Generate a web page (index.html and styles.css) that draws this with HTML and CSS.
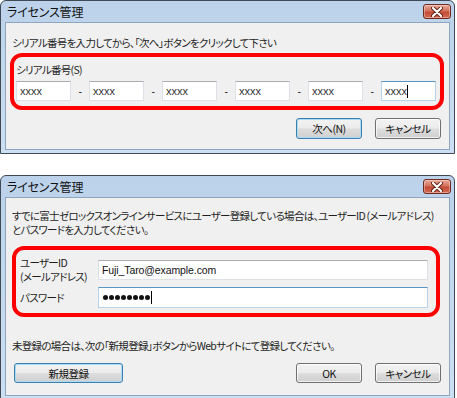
FILE: index.html
```html
<!DOCTYPE html>
<html lang="ja">
<head>
    <meta charset="UTF-8">
    <title>ライセンス管理</title>
    <link rel="stylesheet" href="styles.css">
</head>
<body>

<div class="window serial-window">
    <div class="titlebar">
        <span class="title">ライセンス管理</span>
        <button class="close-btn" aria-label="閉じる">
            <svg width="12" height="10" viewBox="0 0 12 10">
                <path d="M2 1 L10 9 M10 1 L2 9" stroke="#5a1e14" stroke-width="4" stroke-linecap="round"/>
                <path d="M2 1 L10 9 M10 1 L2 9" stroke="#ffffff" stroke-width="2.2" stroke-linecap="round"/>
            </svg>
        </button>
    </div>
    <div class="content">
        <p class="intro">シリアル番号を入力してから、「次へ」ボタンをクリックして下さい</p>
        <div class="highlight serial-box">
            <div class="label">シリアル番号(S)</div>
            <div class="serial-row">
                <div class="field serial">xxxx</div><span class="dash">-</span>
                <div class="field serial">xxxx</div><span class="dash">-</span>
                <div class="field serial">xxxx</div><span class="dash">-</span>
                <div class="field serial">xxxx</div><span class="dash">-</span>
                <div class="field serial">xxxx</div><span class="dash">-</span>
                <div class="field serial focused">xxxx<span class="caret"></span></div>
            </div>
        </div>
        <div class="buttons">
            <button class="btn default">次へ(N)</button>
            <button class="btn">キャンセル</button>
        </div>
    </div>
</div>

<div class="window login-window">
    <div class="titlebar">
        <span class="title">ライセンス管理</span>
        <button class="close-btn" aria-label="閉じる">
            <svg width="12" height="10" viewBox="0 0 12 10">
                <path d="M2 1 L10 9 M10 1 L2 9" stroke="#5a1e14" stroke-width="4" stroke-linecap="round"/>
                <path d="M2 1 L10 9 M10 1 L2 9" stroke="#ffffff" stroke-width="2.2" stroke-linecap="round"/>
            </svg>
        </button>
    </div>
    <div class="content">
        <p class="intro two-lines">すでに富士ゼロックスオンラインサービスにユーザー登録している場合は、ユーザーID (メールアドレス)<br>とパスワードを入力してください。</p>
        <div class="highlight login-box">
            <div class="label">ユーザーID<br>(メールアドレス)</div>
            <div class="field wide">Fuji_Taro@example.com</div>
            <div class="label">パスワード</div>
            <div class="field wide focused password">
                <span class="dot"></span><span class="dot"></span><span class="dot"></span><span class="dot"></span><span class="dot"></span><span class="dot"></span><span class="dot"></span><span class="dot"></span><span class="caret"></span>
            </div>
        </div>
        <p class="note">未登録の場合は、次の「新規登録」ボタンからWebサイトにて登録してください。</p>
        <div class="buttons split">
            <button class="btn default register">新規登録</button>
            <div class="right">
                <button class="btn">OK</button>
                <button class="btn">キャンセル</button>
            </div>
        </div>
    </div>
</div>

</body>
</html>
```

FILE: styles.css
```css
body {
    margin: 0;
    font-family: "Noto Sans CJK JP", sans-serif;
    font-size: 10.5px;
    letter-spacing: -0.7px;
    font-feature-settings: "palt";
    color: #1e1e1e;
    background: #ffffff;
}

.window {
    width: 455px;
    box-sizing: border-box;
    border: 1px solid #3f4a56;
    border-radius: 6px 6px 0 0;
    background: linear-gradient(#bcd2ea, #cddff2);
    padding: 0 4px 3px;
}
.login-window {
    margin-top: 21px;
}
.login-window .content {
    padding-bottom: 12px;
}

.titlebar {
    height: 21px;
    display: flex;
    justify-content: space-between;
    align-items: flex-start;
}
.title {
    font-size: 12px;
    letter-spacing: -0.2px;
    padding: 3px 0 0 2px;
    line-height: 16px;
    color: #111;
}
.close-btn {
    margin: 3px -1px 0 0;
    width: 28px;
    height: 15px;
    padding: 0;
    border: 1px solid #6e2a20;
    border-radius: 3px;
    background: linear-gradient(#e9a897 0%, #d3725e 45%, #c24b35 55%, #d46b54 100%);
    display: flex;
    align-items: center;
    justify-content: center;
    box-shadow: inset 0 0 0 1px rgba(255,255,255,0.35);
}

.content {
    background: #f0f0f0;
    border: 1px solid #8fa4bd;
    padding: 0 8px 10px 6px;
}

.intro {
    margin: 13px 0 0 0;
    line-height: 14px;
    white-space: nowrap;
}
.two-lines {
    margin-top: 11px;
}

.highlight {
    border: 4px solid #ff0000;
    border-radius: 12px;
}
.serial-box {
    margin: 3px -3px 0 -2px;
    padding: 6px 0 5px 2px;
}
.label {
    line-height: 14px;
}
.serial-row {
    display: flex;
    align-items: center;
    margin-top: 4px;
}
.dash {
    width: 18px;
    text-align: center;
    font-family: "Liberation Sans", sans-serif;
}

.field {
    box-sizing: border-box;
    height: 20px;
    background: #ffffff;
    border: 1px solid #dde1e7;
    border-top-color: #abadb3;
    font-family: "Liberation Sans", sans-serif;
    font-size: 11px;
    letter-spacing: 0;
    line-height: 18px;
    padding-left: 3px;
    color: #333;
    display: flex;
    align-items: center;
}
.serial {
    width: 55px;
}
.focused {
    border-color: #b5d3ea;
    border-top-color: #5b95c8;
}
.caret {
    display: inline-block;
    width: 1px;
    height: 13px;
    background: #000;
}

.login-box {
    margin: 9px 1px 0 0;
    padding: 6px 8px 5px 4px;
    display: grid;
    grid-template-columns: 78px 1fr;
    align-items: center;
    row-gap: 3px;
}
.login-box .label {
    line-height: 14px;
}
.wide {
    height: 20px;
    font-size: 10.5px;
    letter-spacing: -0.1px;
    color: #111;
}
.password {
    height: 21px;
    padding-left: 4px;
}
.dot {
    display: inline-block;
    width: 5px;
    height: 5px;
    border-radius: 50%;
    background: #111;
    margin-right: 1px;
}

.note {
    margin: 22px 0 0 0;
    line-height: 14px;
    white-space: nowrap;
}

.buttons {
    display: flex;
    justify-content: flex-end;
    gap: 13px;
    margin-top: 8px;
}
.split {
    justify-content: space-between;
    margin-top: 10px;
    padding-left: 2px;
}
.split .right {
    display: flex;
    gap: 13px;
}
.btn {
    width: 66px;
    height: 21px;
    padding: 0;
    font-family: "Noto Sans CJK JP", sans-serif;
    font-size: 10.5px;
    letter-spacing: -0.5px;
    font-feature-settings: "palt";
    color: #111;
    border: 1px solid #707070;
    border-radius: 3px;
    background: linear-gradient(#f3f3f3 0%, #ebebeb 48%, #dddddd 52%, #cfcfcf 100%);
    box-shadow: inset 0 0 0 1px rgba(255,255,255,0.7);
}
.btn.default {
    border-color: #3c7fb1;
    box-shadow: inset 0 0 0 1px #a9dbf6;
}
.split .btn {
    height: 20px;
}
.register {
    width: 109px;
}
```
